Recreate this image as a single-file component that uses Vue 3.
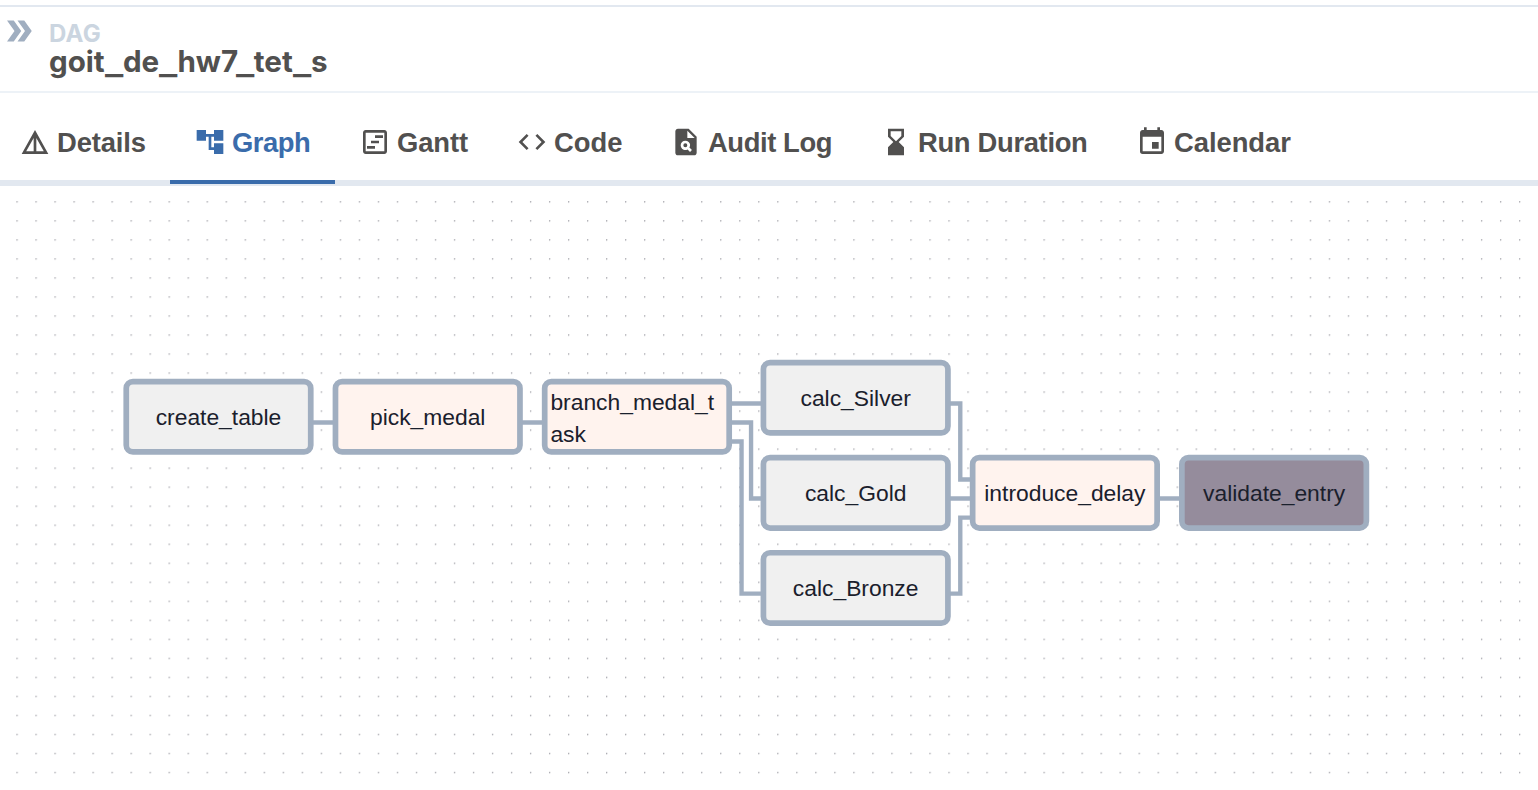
<script setup>
const title = 'goit_de_hw7_tet_s'
const titleParts = title.split(/(_)/)

const tabs = [
  { label: 'Details', key: 'details', d: 'M12 3L2 21h20L12 3zm1 5.92L18.6 19H13V8.92zm-2 0V19H5.4L11 8.92z' },
  { label: 'Graph', key: 'graph', active: true, d: 'M22 11V3h-7v3H9V3H2v8h7V8h2v10h4v3h7v-8h-7v3h-2V8h2v3z' },
  { label: 'Gantt', key: 'gantt', d: 'M19 5v14H5V5h14m0-2H5c-1.1 0-2 .9-2 2v14c0 1.1.9 2 2 2h14c1.1 0 2-.9 2-2V5c0-1.1-.9-2-2-2zM6 15h6v2H6zM12 7h6v2h-6zM9 11h6v2H9z' },
  { label: 'Code', key: 'code', d: 'M9.4 16.6L4.8 12l4.6-4.6L8 6l-6 6 6 6 1.4-1.4zm5.2 0l4.6-4.6-4.6-4.6L16 6l6 6-6 6-1.4-1.4z' },
  { label: 'Audit Log', key: 'audit', d: 'M14 2H6c-1.1 0-1.99.9-1.99 2L4 20c0 1.1.89 2 1.99 2H18c1.1 0 2-.9 2-2V8l-6-6zm1.04 17.45l-1.88-1.88c-1.33.71-3.01.53-4.13-.59a3.495 3.495 0 010-4.95 3.495 3.495 0 014.95 0 3.48 3.48 0 01.59 4.13l1.88 1.88-1.41 1.41zM13 9V3.5L18.5 9H13zM11.5 13a1.5 1.5 0 100 3 1.5 1.5 0 000-3z' },
  { label: 'Run Duration', key: 'duration', d: 'M18 22l-.01-6L14 12l3.99-4.01L18 2H6v6l4 4-4 3.99V22h12zM8 7.5V4h8v3.5l-4 4-4-4z' },
  { label: 'Calendar', key: 'calendar', d: 'M17 12h-5v5h5v-5zM16 1v2H8V1H6v2H5c-1.11 0-1.99.9-1.99 2L3 19a2 2 0 002 2h14c1.1 0 2-.9 2-2V5c0-1.1-.9-2-2-2h-1V1h-2zm3 18H5V8h14v11z' },
]

const nodes = [
  { label: 'create_table', x: 0, y: 10, kind: 'plain' },
  { label: 'pick_medal', x: 110, y: 10, kind: 'python' },
  { label: 'branch_medal_task', x: 220, y: 10, kind: 'python' },
  { label: 'calc_Silver', x: 335, y: 0, kind: 'plain' },
  { label: 'calc_Gold', x: 335, y: 50, kind: 'plain' },
  { label: 'calc_Bronze', x: 335, y: 100, kind: 'plain' },
  { label: 'introduce_delay', x: 445, y: 50, kind: 'python' },
  { label: 'validate_entry', x: 555, y: 50, kind: 'sensor' },
]

const edges = [
  'M98 33H112',
  'M208 33H222',
  'M318 23H337',
  'M318 33H330V73H337',
  'M318 43H325V123H337',
  'M433 23H440V63H447',
  'M433 73H447',
  'M433 123H440V83H447',
  'M543 73H557',
]
</script>

<template>
  <div class="page">
    <header class="header">
      <svg class="expand" viewBox="0 0 24 24"><path d="M15.5 5H11l5 7-5 7h4.5l5-7z" /><path d="M8.5 5H4l5 7-5 7h4.5l5-7z" /></svg>
      <div class="heading">
        <div class="kicker">DAG</div>
        <div class="title"><span v-for="(p, i) in titleParts" :key="i" :class="{ bar: p === '_' }">{{ p }}</span></div>
      </div>
    </header>

    <nav class="tabs">
      <div v-for="t in tabs" :key="t.key" class="tab" :class="[t.key, { active: t.active }]">
        <svg viewBox="0 0 24 24"><path :d="t.d" fill-rule="evenodd" /></svg>
        <span>{{ t.label }}</span>
      </div>
    </nav>

    <main class="canvas">
      <svg class="dots">
        <defs>
          <pattern id="grid" x="16.4" y="15.2" width="19.02" height="19.02" patternUnits="userSpaceOnUse">
            <circle cx="0.7" cy="0.7" r="0.65" />
          </pattern>
        </defs>
        <rect width="100%" height="100%" fill="url(#grid)" />
      </svg>
      <div class="viewport">
        <svg class="edges" viewBox="0 0 660 140">
          <path v-for="e in edges" :key="e" :d="e" />
        </svg>
        <div
          v-for="n in nodes"
          :key="n.label"
          class="node"
          :class="n.kind"
          :style="{ left: n.x + 'px', top: n.y + 'px' }"
        >
          <span>{{ n.label }}</span>
        </div>
      </div>
    </main>
  </div>
</template>

<style>
body {
  margin: 0;
  overflow: hidden;
}
</style>

<style scoped>
.page {
  box-sizing: border-box;
  display: flex;
  flex-direction: column;
  width: 1538px;
  height: 790px;
  padding-top: 5px;
  background: #fff;
  color: #51504f;
  font-family: "Liberation Sans", Arial, sans-serif;
  overflow: hidden;
}
.header {
  box-sizing: border-box;
  display: flex;
  flex: none;
  height: 88px;
  border-top: 2px solid #e2e8f0;
  border-bottom: 2px solid #edf2f7;
}
.expand {
  width: 36px;
  height: 36px;
  margin: 6px 12px 0 1px;
  fill: #a0aec0;
}
.heading {
  padding-top: 14px;
  font-family: Inter, sans-serif;
  font-weight: 700;
  white-space: nowrap;
}
.kicker {
  height: 26px;
  font-size: 24px;
  line-height: 26px;
  letter-spacing: 0.3px;
  color: #cbd5e0;
}
.title {
  font-size: 29.6px;
  line-height: 29px;
}
.title .bar {
  display: inline-block;
  width: 18.2px;
  transform: translateY(2px) scaleX(1.3);
  transform-origin: 0 0;
}
.title .bar:nth-child(6) {
  margin-left: -2.6px;
}
.tabs {
  box-sizing: border-box;
  display: flex;
  flex: none;
  height: 93px;
  padding-right: 24px;
  border-bottom: 6px solid #e2e8f0;
  margin-left: -5px;
}
.tab {
  box-sizing: border-box;
  display: flex;
  flex: none;
  align-items: center;
  gap: 6px;
  height: 91px;
  padding: 10px 0 0 24px;
  border-bottom: 4px solid transparent;
  font-size: 27.4px;
  font-weight: 700;
  white-space: nowrap;
}
.tab svg {
  flex: none;
  width: 32px;
  height: 32px;
  fill: currentColor;
}
.tab span {
  padding-top: 2px;
}
.tab.active {
  color: #3a6cab;
  border-bottom-color: #3a6cab;
}
.details { width: 175px; letter-spacing: -0.15px; }
.graph { width: 165px; letter-spacing: -0.5px; }
.gantt { width: 157px; letter-spacing: -0.1px; }
.code { width: 154px; }
.audit { width: 210px; letter-spacing: -0.42px; }
.duration { width: 256px; letter-spacing: -0.33px; }
.calendar { width: 183px; letter-spacing: -0.05px; }
.canvas {
  position: relative;
  flex: 1;
}
.dots {
  display: block;
  width: 100%;
  height: 100%;
}
.dots circle {
  fill: #81818a;
}
.viewport {
  position: absolute;
  left: 0;
  top: 0;
  width: 660px;
  height: 140px;
  transform: translate(123.4px, 173.7px) scale(1.902);
  transform-origin: 0 0;
}
.edges {
  display: block;
  width: 660px;
  height: 140px;
}
.edges path {
  fill: none;
  stroke: #a0aec0;
  stroke-width: 2.3;
}
.node {
  position: absolute;
  box-sizing: border-box;
  display: flex;
  align-items: center;
  justify-content: center;
  width: 100px;
  height: 40px;
  padding: 2px 1.5px 0 1.5px;
  border: 3px solid #a0aec0;
  border-radius: 5px;
  color: #1a202c;
  font-size: 12px;
  line-height: 17.3px;
}
.node span {
  overflow-wrap: anywhere;
  transform: translateY(0.25px);
}
.plain { background: #f0f0f0; }
.python { background: #fff3ee; }
.sensor { background: #958c9c; }
</style>
